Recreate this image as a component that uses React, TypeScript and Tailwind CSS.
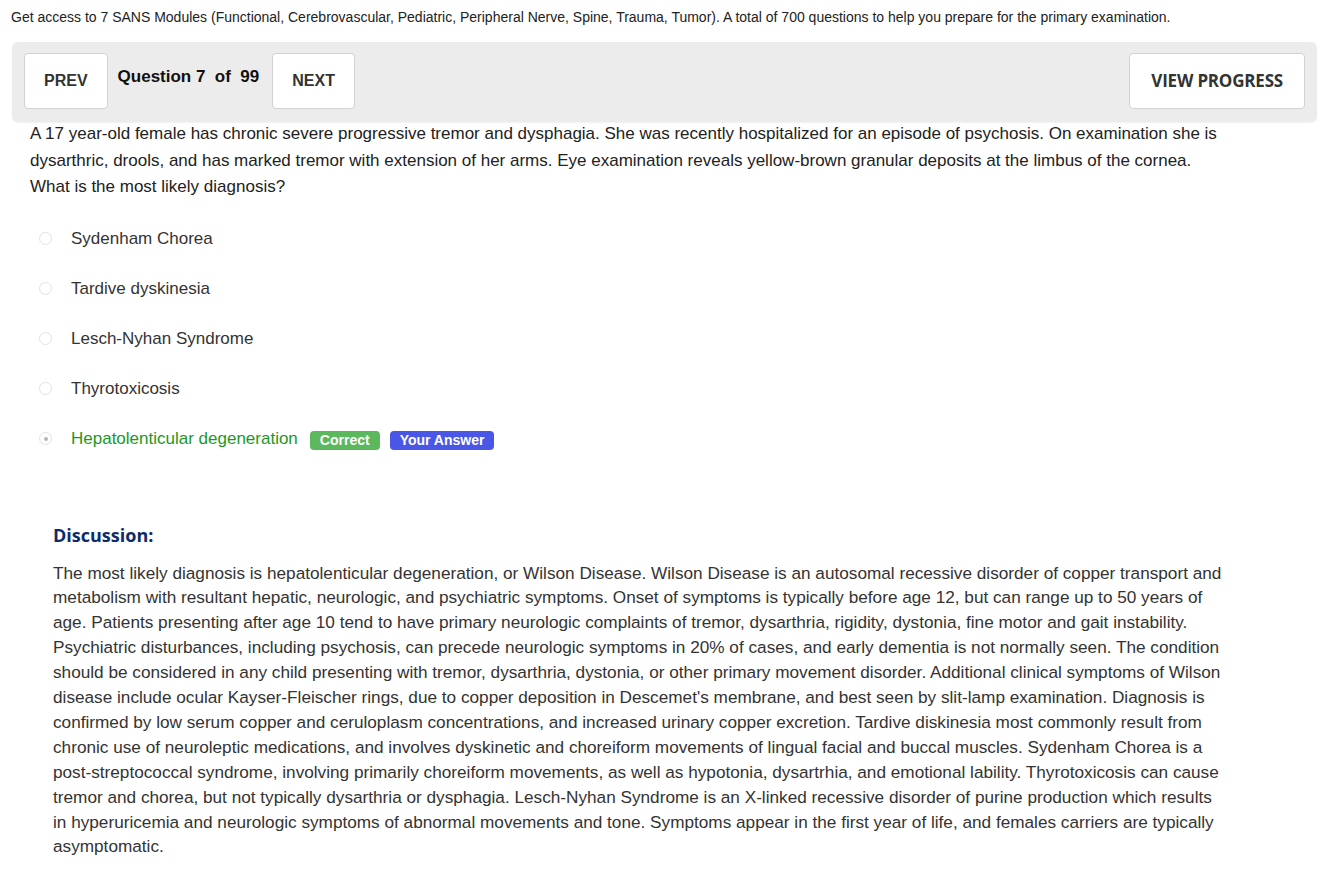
const discussion = [
  "The most likely diagnosis is hepatolenticular degeneration, or Wilson Disease. Wilson Disease is an autosomal recessive disorder of copper transport and",
  "metabolism with resultant hepatic, neurologic, and psychiatric symptoms. Onset of symptoms is typically before age 12, but can range up to 50 years of",
  "age. Patients presenting after age 10 tend to have primary neurologic complaints of tremor, dysarthria, rigidity, dystonia, fine motor and gait instability.",
  "Psychiatric disturbances, including psychosis, can precede neurologic symptoms in 20% of cases, and early dementia is not normally seen. The condition",
  "should be considered in any child presenting with tremor, dysarthria, dystonia, or other primary movement disorder. Additional clinical symptoms of Wilson",
  "disease include ocular Kayser-Fleischer rings, due to copper deposition in Descemet's membrane, and best seen by slit-lamp examination. Diagnosis is",
  "confirmed by low serum copper and ceruloplasm concentrations, and increased urinary copper excretion. Tardive diskinesia most commonly result from",
  "chronic use of neuroleptic medications, and involves dyskinetic and choreiform movements of lingual facial and buccal muscles. Sydenham Chorea is a",
  "post-streptococcal syndrome, involving primarily choreiform movements, as well as hypotonia, dysartrhia, and emotional lability. Thyrotoxicosis can cause",
  "tremor and chorea, but not typically dysarthria or dysphagia. Lesch-Nyhan Syndrome is an X-linked recessive disorder of purine production which results",
  "in hyperuricemia and neurologic symptoms of abnormal movements and tone. Symptoms appear in the first year of life, and females carriers are typically",
  "asymptomatic.",
];

const question = [
  "A 17 year-old female has chronic severe progressive tremor and dysphagia. She was recently hospitalized for an episode of psychosis. On examination she is",
  "dysarthric, drools, and has marked tremor with extension of her arms. Eye examination reveals yellow-brown granular deposits at the limbus of the cornea.",
  "What is the most likely diagnosis?",
];

const options = [
  { label: "Sydenham Chorea" },
  { label: "Tardive dyskinesia" },
  { label: "Lesch-Nyhan Syndrome" },
  { label: "Thyrotoxicosis" },
  { label: "Hepatolenticular degeneration", correct: true, chosen: true },
];

function NavButton({ children, wide }: { children: React.ReactNode; wide?: boolean }) {
  return (
    <button
      className={
        "h-[56px] bg-white border border-[#d2d2d2] rounded-[4px] text-[#333] font-bold " +
        (wide
          ? "px-[21px] font-['Open_Sans',sans-serif] text-[17px] tracking-[-0.2px]"
          : "px-[19px] font-['Liberation_Sans',Arial,sans-serif] text-[16px]")
      }
    >
      {children}
    </button>
  );
}

export default function App() {
  return (
    <div className="min-h-[886px] bg-white font-['Liberation_Sans',Arial,sans-serif]">
      <p className="px-[11px] pt-[8px] text-[14px] leading-[18px] text-[#222]">
        Get access to 7 SANS Modules (Functional, Cerebrovascular, Pediatric, Peripheral Nerve, Spine, Trauma, Tumor). A total of 700 questions to help you prepare for the primary examination.
      </p>

      {/* nav bar */}
      <div className="ml-[12px] mr-[17px] mt-[16px] h-[80px] rounded-[6px] bg-[#ececec] shadow-[0_1px_2px_rgba(0,0,0,0.06)] px-[12px] pt-[11px] flex items-start">
        <NavButton>PREV</NavButton>
        <div className="ml-[10px] mr-[13px] pt-[14px] text-[17px] leading-[20px] font-bold text-[#111] whitespace-pre">
          {"Question 7  of  99"}
        </div>
        <NavButton>NEXT</NavButton>
        <div className="flex-1" />
        <NavButton wide>VIEW PROGRESS</NavButton>
      </div>

      {/* question */}
      <div className="pl-[30px] text-[17px] leading-[26.5px] text-[#222] -mt-[1px] whitespace-nowrap">
        {question.map((l, i) => (
          <div key={i}>{l}</div>
        ))}
      </div>

      {/* options */}
      <div className="mt-[13px] pl-[39px]">
        {options.map((o) => (
          <div key={o.label} className="h-[50px] flex items-center">
            <span className="w-[13px] h-[13px] rounded-full border border-[#e2e2e2] bg-white flex items-center justify-center">
              {o.chosen && <span className="w-[4px] h-[4px] rounded-full bg-[#b5b5b5]" />}
            </span>
            <span
              className={
                "ml-[19px] text-[17px] leading-[24px] " +
                (o.correct ? "text-[#1c981f]" : "text-[#333]")
              }
            >
              {o.label}
            </span>
            {o.correct && (
              <>
                <span className="ml-[12px] mt-[4px] h-[19px] px-[10px] rounded-[4px] bg-[#5cb85c] text-white text-[14px] font-bold leading-[19px]">
                  Correct
                </span>
                <span className="ml-[10px] mt-[4px] h-[19px] px-[10px] rounded-[4px] bg-[#4a56e6] text-white text-[14px] font-bold leading-[19px]">
                  Your Answer
                </span>
              </>
            )}
          </div>
        ))}
      </div>

      {/* discussion */}
      <div className="pl-[53px] mt-[59px]">
        <h3 className="font-['Open_Sans',sans-serif] font-bold text-[18px] leading-[25px] text-[#0d2b6b]">
          Discussion:
        </h3>
        <div className="mt-[13px] text-[17.2px] leading-[24.9px] text-[#333] whitespace-nowrap">
          {discussion.map((l, i) => (
            <div key={i}>{l}</div>
          ))}
        </div>
      </div>
    </div>
  );
}
